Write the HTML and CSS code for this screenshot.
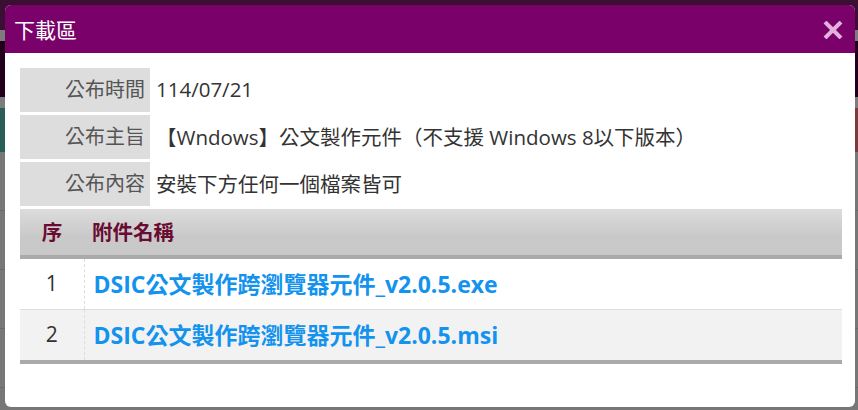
FILE: index.html
```html
<!DOCTYPE html>
<html lang="zh-Hant">
<head>
<meta charset="utf-8">
<title>下載區</title>
<link rel="stylesheet" href="styles.css">
</head>
<body>
<div class="backdrop">
  <div class="bd-band bd-top"></div>
  <div class="bd-band bd-line"></div>
  <div class="bd-band bd-dark"></div>
  <div class="bd-band bd-line"></div>
  <div class="bd-band bd-color"></div>
  <div class="bd-rest"></div>
</div>
<div class="modal">
  <div class="modal-head">
    <span class="modal-title">下載區</span>
    <svg class="close" width="20" height="18" viewBox="0 0 20 18"><path d="M2 1 L18 17 M18 1 L2 17" stroke="#e3b2dc" stroke-width="4" stroke-linecap="butt"/></svg>
  </div>
  <div class="modal-body">
    <div class="info">
      <div class="lbl">公布時間</div><div class="val">114/07/21</div>
      <div class="lbl">公布主旨</div><div class="val">【Wndows】公文製作元件（不支援 Windows 8以下版本）</div>
      <div class="lbl">公布內容</div><div class="val">安裝下方任何一個檔案皆可</div>
    </div>
    <table class="files">
      <thead>
        <tr><th class="c-no">序</th><th class="c-name">附件名稱</th></tr>
      </thead>
      <tbody>
        <tr><td class="c-no">1</td><td class="c-name"><a href="#">DSIC公文製作跨瀏覽器元件_v2.0.5.exe</a></td></tr>
        <tr class="alt"><td class="c-no">2</td><td class="c-name"><a href="#">DSIC公文製作跨瀏覽器元件_v2.0.5.msi</a></td></tr>
      </tbody>
    </table>
  </div>
</div>
</body>
</html>
```

FILE: styles.css
```css
html, body {
  margin: 0;
  padding: 0;
  width: 858px;
  height: 410px;
  overflow: hidden;
  font-family: "Open Sans", "Noto Sans CJK TC", sans-serif;
}
.backdrop {
  display: flex;
  flex-direction: column;
  height: 410px;
  background: #747474;
}
.bd-band { flex: none; }
.bd-top { height: 30px; background: #3a0f33; }
.bd-line { height: 11px; background: #7c7c7c; }
.bd-dark { height: 56px; background: #22001c; }
.bd-color { height: 44px; background: linear-gradient(90deg, #2a5c58 0, #2a5c58 50%, #7a3a3e 50%, #7a3a3e 100%); }
.bd-rest {
  flex: 1;
  background: repeating-linear-gradient(180deg, #777 0, #777 58px, #6a6a6a 58px, #6a6a6a 59px);
}
.modal {
  position: absolute;
  left: 5px;
  top: 5px;
  width: 850px;
  height: 402px;
  background: #fff;
  border-radius: 6px;
  overflow: hidden;
}
.modal-head {
  height: 48px;
  background: #7a006a;
  display: flex;
  align-items: center;
  justify-content: space-between;
  padding: 0 12px 0 9px;
}
.modal-title {
  color: #fff;
  font-size: 21px;
  line-height: 1;
  margin-top: 2px;
}
.close { display: block; margin-top: 1px; }
.modal-body {
  padding: 15px 13px 0 15px;
}
.info {
  display: grid;
  grid-template-columns: 130px 1fr;
  grid-auto-rows: 44px;
  row-gap: 3px;
}
.lbl {
  background: #dddddd;
  color: #555;
  font-size: 20px;
  padding: 0 5px 3px 0;
  display: flex;
  align-items: center;
  justify-content: flex-end;
}
.val {
  color: #333;
  font-size: 20.5px;
  padding: 0 0 3px 6px;
  display: flex;
  align-items: center;
  white-space: nowrap;
}
.files {
  width: 822px;
  margin-top: 3px;
  border-collapse: collapse;
}
.files th {
  height: 44px;
  padding: 0 0 2px;
  background: linear-gradient(180deg, #dcdcdc 0, #c9c9c9 60%, #c8c8c8 100%);
  border-bottom: 4px solid #aaaaaa;
  color: #6a0b32;
  font-size: 20.5px;
  font-weight: bold;
}
.files th.c-no { width: 64px; text-align: center; }
.files th.c-name { text-align: left; padding-left: 8px; }
.files td {
  height: 47px;
  padding: 0 0 3px;
  font-size: 21px;
}
.files tbody tr + tr td { border-top: 1px solid #dddddd; }
.files tbody tr:last-child td { border-bottom: 4px solid #aaaaaa; }
.files td.c-no { text-align: center; color: #333; }
.files td.c-name { border-left: 1px dashed #dddddd; padding-left: 9px; }
.files tr.alt td { background: #f2f2f2; }
.files a {
  color: #1393ee;
  font-size: 23px;
  font-weight: bold;
  text-decoration: none;
}
```
